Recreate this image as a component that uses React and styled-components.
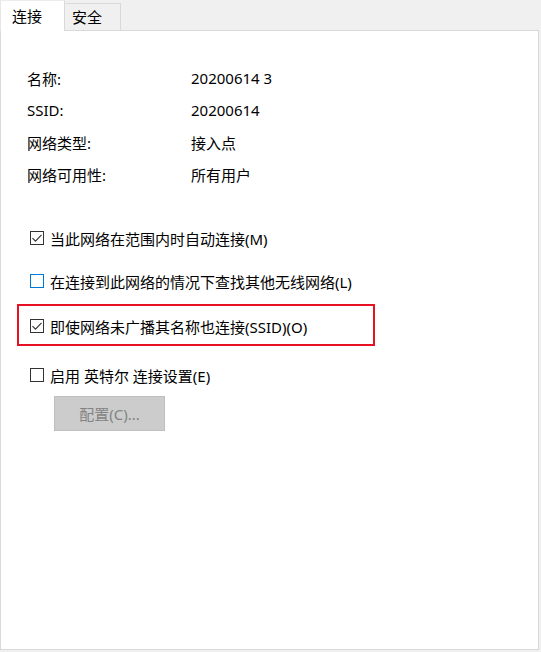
import React from "react";
import styled, { createGlobalStyle } from "styled-components";

const GlobalStyle = createGlobalStyle`
  html, body {
    margin: 0;
    padding: 0;
    background: #f0f0f0;
  }
  body {
    font-family: "Noto Sans", "Noto Sans CJK SC", sans-serif;
    font-size: 15px;
    color: #000;
  }
`;

const Dialog = styled.div`
  width: 539px;
  height: 650px;
  display: flex;
  flex-direction: column;
`;

const TabStrip = styled.div`
  display: flex;
  align-items: flex-end;
  height: 30px;
  position: relative;
  z-index: 1;
`;

const Tab = styled.div`
  box-sizing: border-box;
  display: flex;
  align-items: center;
  border: 1px solid #d9d9d9;
  border-bottom: none;
  background: ${(p) => (p.$active ? "#fff" : "#f0f0f0")};
  height: ${(p) => (p.$active ? "31px" : "27px")};
  margin-bottom: ${(p) => (p.$active ? "-1px" : "0")};
  width: ${(p) => (p.$active ? "65px" : "56px")};
  padding-left: ${(p) => (p.$active ? "11px" : "6px")};
  padding-top: ${(p) => (p.$active ? "0" : "1px")};
  border-left-color: ${(p) => (p.$active ? "#e6e6e6" : "transparent")};
  border-top-color: ${(p) => (p.$active ? "#ececec" : "#d9d9d9")};
  line-height: 1;
`;

const Panel = styled.div`
  box-sizing: border-box;
  flex: 1;
  background: #fff;
  border: 1px solid #d9d9d9;
  padding: 31px 0 0 26px;
`;

const InfoRow = styled.div`
  display: grid;
  grid-template-columns: 164px 1fr;
  height: 32px;
  align-items: center;
`;

const Options = styled.div`
  display: flex;
  flex-direction: column;
  margin-top: 38px;
  padding-left: 3px;
`;

const CheckRow = styled.label`
  display: flex;
  align-items: center;
  gap: 6px;
  height: 20px;
  margin-top: ${(p) => p.$gap || 0}px;
`;

const Box = styled.span`
  box-sizing: border-box;
  width: 14px;
  height: 14px;
  border: 1px solid ${(p) => (p.$focus ? "#0078d7" : "#333")};
  background: #fff;
  display: flex;
  align-items: center;
  justify-content: center;
  flex: none;
`;

const Highlight = styled.div`
  box-sizing: border-box;
  width: 358px;
  height: 42px;
  margin: 13px 0 0 -13px;
  border: 2px solid #e81123;
  padding: 10px 0 0 11px;
`;

const ConfigButton = styled.div`
  box-sizing: border-box;
  width: 111px;
  height: 35px;
  margin: 11px 0 0 24px;
  background: #cccccc;
  border: 1px solid #bfbfbf;
  color: #838383;
  display: flex;
  align-items: center;
  justify-content: center;
`;

function Check({ checked, focus }) {
  return (
    <Box $focus={focus}>
      {checked && (
        <svg width="12" height="12" viewBox="0 0 12 12">
          <path d="M1.5 6.2 L4.5 9.2 L10.5 2.8" fill="none" stroke="#333" strokeWidth="1.1" />
        </svg>
      )}
    </Box>
  );
}

const info = [
  ["名称:", "20200614 3"],
  ["SSID:", "20200614"],
  ["网络类型:", "接入点"],
  ["网络可用性:", "所有用户"],
];

export default function App() {
  return (
    <Dialog>
      <GlobalStyle />
      <TabStrip>
        <Tab $active>连接</Tab>
        <Tab>安全</Tab>
      </TabStrip>
      <Panel>
        {info.map(([k, v]) => (
          <InfoRow key={k}>
            <span>{k}</span>
            <span>{v}</span>
          </InfoRow>
        ))}
        <Options>
          <CheckRow>
            <Check checked />
            当此网络在范围内时自动连接(M)
          </CheckRow>
          <CheckRow $gap={23}>
            <Check focus />
            在连接到此网络的情况下查找其他无线网络(L)
          </CheckRow>
          <Highlight>
            <CheckRow>
              <Check checked />
              即使网络未广播其名称也连接(SSID)(O)
            </CheckRow>
          </Highlight>
          <CheckRow $gap={19}>
            <Check />
            启用 英特尔 连接设置(E)
          </CheckRow>
          <ConfigButton>配置(C)...</ConfigButton>
        </Options>
      </Panel>
    </Dialog>
  );
}
